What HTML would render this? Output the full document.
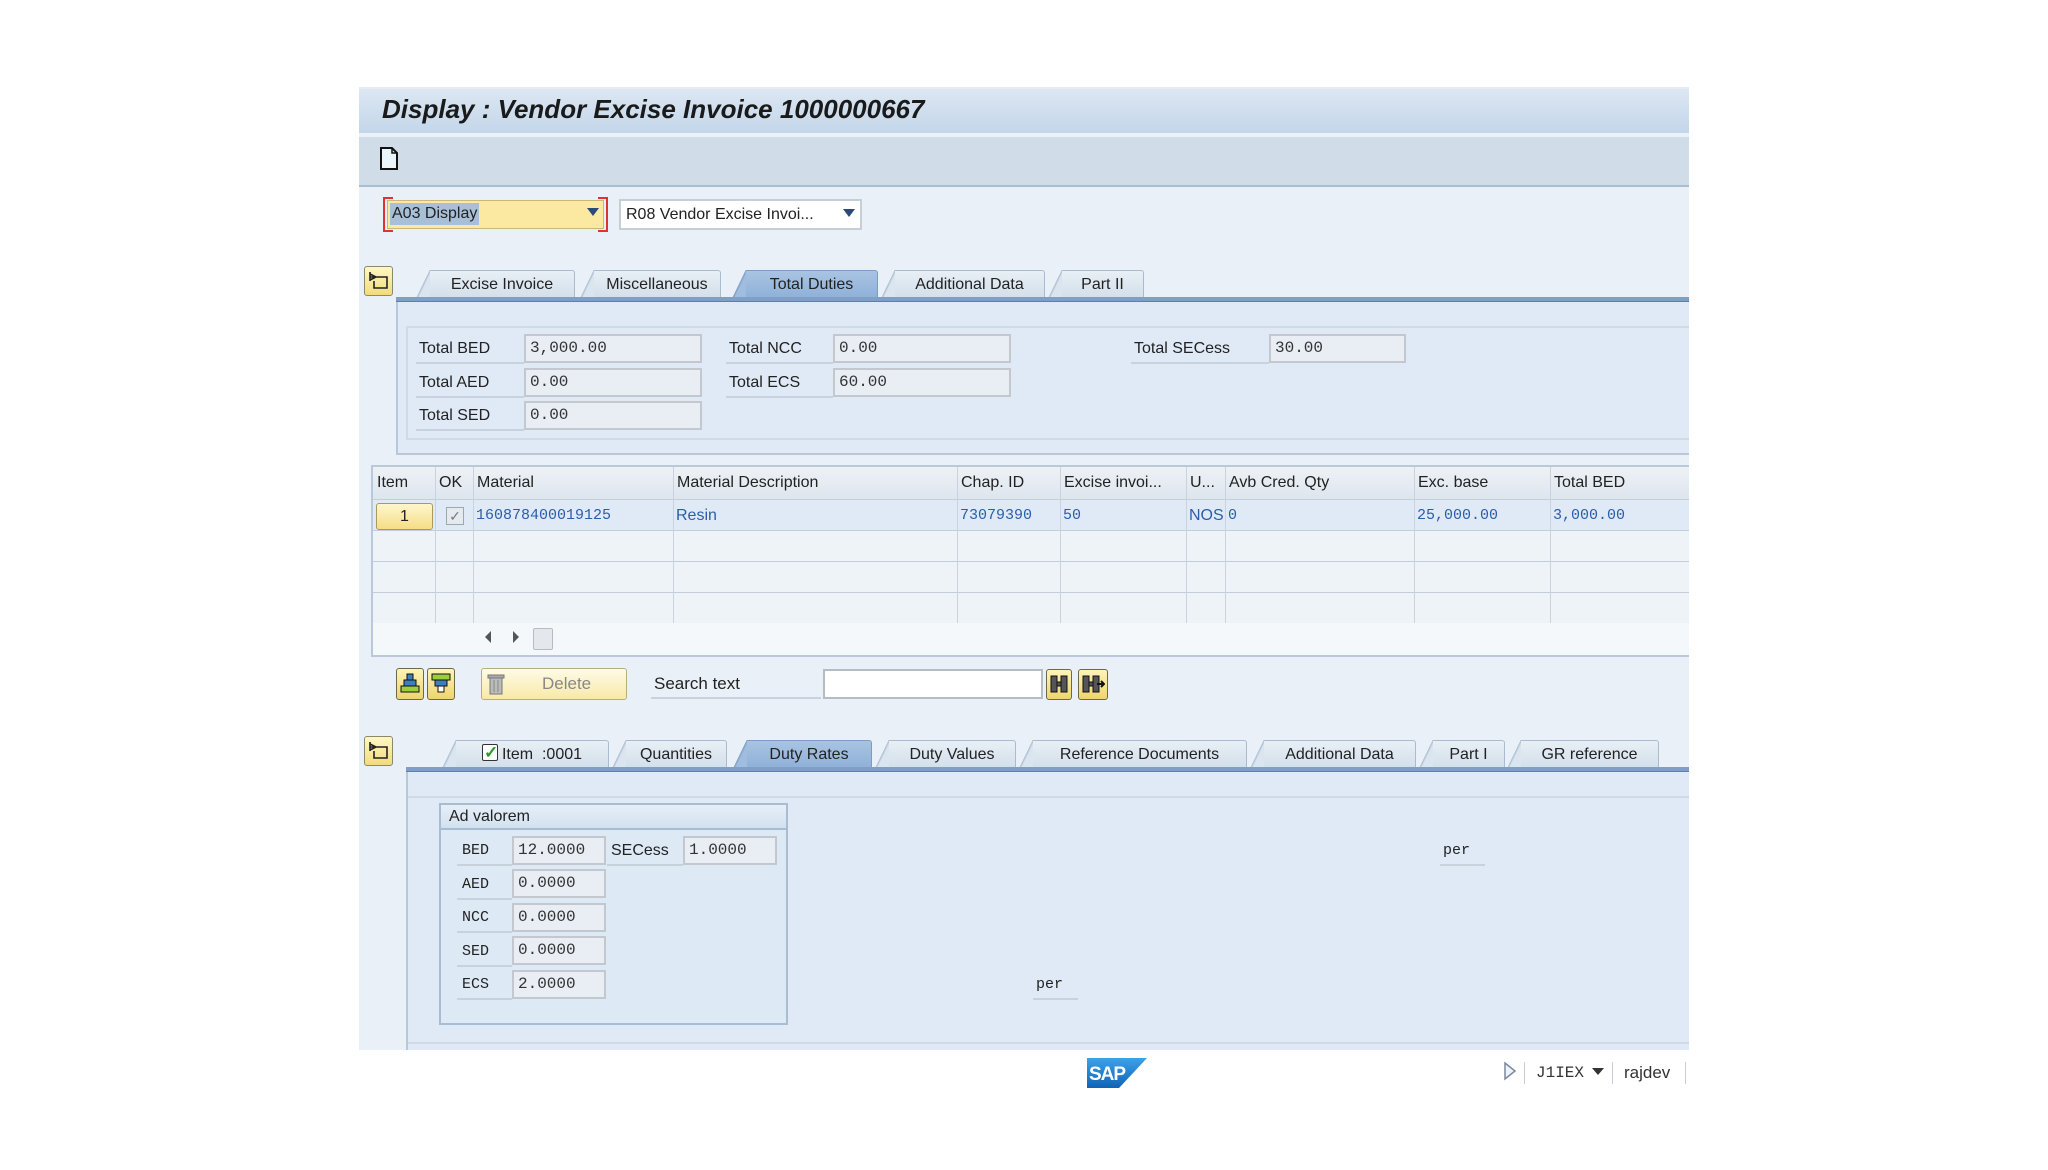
<!DOCTYPE html>
<html><head><meta charset="utf-8">
<style>
*{margin:0;padding:0;box-sizing:border-box}
body{width:2048px;height:1170px;background:#fff;position:relative;overflow:hidden;font-family:"Liberation Sans",sans-serif;font-size:16px;color:#222}
.a{position:absolute}
.lbl{position:absolute;border-bottom:2px solid #c8d2dc;height:29px;line-height:27px;padding-left:3px;color:#222;font-size:16px}
.fld{position:absolute;background:#e8eef4;border:2px solid #c2c8ce;height:29px;line-height:25px;padding-left:4px;font-family:"Liberation Mono",monospace;font-size:16px;color:#333}
.tab{position:absolute;height:28px;background:linear-gradient(#e8eff6,#d3dfea);border:1px solid #a9bccf;border-bottom:none;border-left:none;border-radius:0 3px 0 0;text-align:center;line-height:27px;font-size:16px;color:#222}
.tab.sel{background:linear-gradient(#a9c4e2,#8fb0d8);border-color:#7d9cc4}
.tab:before{content:"";position:absolute;left:-14px;top:-1px;width:14px;height:29px;background:linear-gradient(to bottom right,transparent 48%,#a9bccf 50%,#dbe5ef 58%)}
.tab.sel:before{background:linear-gradient(to bottom right,transparent 48%,#7d9cc4 50%,#a0bde0 58%)}
.tabicon{position:absolute;width:29px;height:30px;background:linear-gradient(#fff7c4,#f2dc7a);border:1px solid #8a8a6a;border-radius:3px}
.col{position:absolute;top:0;bottom:0;border-left:1px solid #c9d3dd}
.hdr{position:absolute;top:0;height:32px;line-height:32px;font-size:16px;color:#222;padding-left:4px}
.cell{position:absolute;height:31px;line-height:31px;font-family:"Liberation Mono",monospace;font-size:15px;color:#2a5ea8;padding-left:3px}
.mono{font-family:"Liberation Mono",monospace;font-size:15px}
</style></head><body>
<div class="a" style="left:359px;top:87px;width:1330px;height:964px;background:#e1ebf6"></div>
<div class="a" style="left:359px;top:87px;width:1330px;height:46px;background:linear-gradient(#dce7f2,#c3d6ea);border-top:2px solid #e6ecf2"></div>
<div class="a" style="left:382px;top:91px;font-size:26px;font-weight:bold;font-style:italic;color:#1a1a1a;line-height:36px">Display : Vendor Excise Invoice 1000000667</div>
<div class="a" style="left:359px;top:133px;width:1330px;height:54px;background:#d0dde8;border-top:4px solid #eaf1f7;border-bottom:2px solid #a9bdd0"></div>
<svg class="a" style="left:379px;top:147px" width="20" height="23"><path d="M2 1H13L18 6V22H2Z" fill="#eaf4fb" stroke="#111" stroke-width="2"/><path d="M13 1V6H18" fill="none" stroke="#111" stroke-width="1.5"/></svg>
<div class="a" style="left:359px;top:187px;width:1330px;height:864px;background:#e9f0f7"></div>
<div class="a" style="left:383px;top:197px;width:10px;height:35px;border:2px solid #d33;border-right:none"></div>
<div class="a" style="left:598px;top:197px;width:10px;height:35px;border:2px solid #d33;border-left:none"></div>
<div class="a" style="left:387px;top:200px;width:217px;height:29px;background:#fbe9a2;border:1px solid #c8b97a"></div>
<div class="a" style="left:390px;top:203px;height:22px;line-height:22px;padding:0 2px;background:#a8bfd8;font-size:16px">A03 Display</div>
<div class="a" style="left:587px;top:208px;width:0;height:0;border-left:6px solid transparent;border-right:6px solid transparent;border-top:8px solid #2a4a7a"></div>
<div class="a" style="left:619px;top:199px;width:243px;height:31px;background:#fff;border:2px solid #c6ced6;line-height:27px;padding-left:5px;font-size:16px">R08 Vendor Excise Invoi...</div>
<div class="a" style="left:843px;top:209px;width:0;height:0;border-left:6px solid transparent;border-right:6px solid transparent;border-top:8px solid #2a4a7a"></div>

<div class="tabicon" style="left:364px;top:266px"></div>
<svg class="a" style="left:368px;top:271px" width="22" height="20"><path d="M2 1V10M2 3L8 6L2 9M2 6H19V17H6V10" fill="none" stroke="#222" stroke-width="1.6"/></svg>
<div class="tab" style="left:430px;top:270px;width:145px">Excise Invoice</div>
<div class="tab" style="left:594px;top:270px;width:127px">Miscellaneous</div>
<div class="tab sel" style="left:746px;top:270px;width:132px">Total Duties</div>
<div class="tab" style="left:895px;top:270px;width:150px">Additional Data</div>
<div class="tab" style="left:1062px;top:270px;width:82px">Part II</div>
<div class="a" style="left:396px;top:297px;width:1293px;height:5px;background:#7f9fc6;border-bottom:1px solid #5f7fa8"></div>
<div class="a" style="left:396px;top:302px;width:1293px;height:153px;background:#dfeaf6;border-left:2px solid #b8c8d8;border-bottom:2px solid #b8c8d8"></div>
<div class="a" style="left:406px;top:326px;width:1283px;height:114px;border-top:2px solid #cfdae5;border-bottom:2px solid #cfdae5;border-left:2px solid #cfdae5"></div>

<div class="lbl" style="left:416px;top:335px;width:108px">Total BED</div>
<div class="fld" style="left:524px;top:334px;width:178px">3,000.00</div>
<div class="lbl" style="left:416px;top:369px;width:108px">Total AED</div>
<div class="fld" style="left:524px;top:368px;width:178px">0.00</div>
<div class="lbl" style="left:416px;top:402px;width:108px">Total SED</div>
<div class="fld" style="left:524px;top:401px;width:178px">0.00</div>
<div class="lbl" style="left:726px;top:335px;width:107px">Total NCC</div>
<div class="fld" style="left:833px;top:334px;width:178px">0.00</div>
<div class="lbl" style="left:726px;top:369px;width:107px">Total ECS</div>
<div class="fld" style="left:833px;top:368px;width:178px">60.00</div>
<div class="lbl" style="left:1131px;top:335px;width:138px">Total SECess</div>
<div class="fld" style="left:1269px;top:334px;width:137px">30.00</div>

<div class="a" style="left:371px;top:465px;width:1318px;height:192px;background:#fff;border:2px solid #b9c9d9;border-right:none;overflow:hidden">
  <div class="a" style="left:0;top:0;width:1318px;height:33px;background:linear-gradient(#eef2f6,#dde5ee);border-bottom:1px solid #c4ced8"></div>
  <div class="a" style="left:0;top:33px;width:1318px;height:31px;background:#dfeaf6;border-bottom:1px solid #c4ced8"></div>
  <div class="a" style="left:0;top:64px;width:1318px;height:31px;background:#eef3f8;border-bottom:1px solid #c4ced8"></div>
  <div class="a" style="left:0;top:95px;width:1318px;height:31px;background:#eef3f8;border-bottom:1px solid #c4ced8"></div>
  <div class="a" style="left:0;top:126px;width:1318px;height:30px;background:#eef3f8"></div>
  <div class="a" style="left:0;top:156px;width:1318px;height:34px;background:#f5f8fb"></div>
  <div class="a" style="left:0;top:0;width:1318px;height:156px">
    <div class="col" style="left:62px"></div><div class="col" style="left:100px"></div><div class="col" style="left:300px"></div><div class="col" style="left:584px"></div><div class="col" style="left:687px"></div><div class="col" style="left:813px"></div><div class="col" style="left:852px"></div><div class="col" style="left:1041px"></div><div class="col" style="left:1177px"></div>
  </div>
  <div class="hdr" style="left:0">Item</div><div class="hdr" style="left:62px">OK</div><div class="hdr" style="left:100px">Material</div><div class="hdr" style="left:300px">Material Description</div><div class="hdr" style="left:584px">Chap. ID</div><div class="hdr" style="left:687px">Excise invoi...</div><div class="hdr" style="left:813px">U...</div><div class="hdr" style="left:852px">Avb Cred. Qty</div><div class="hdr" style="left:1041px">Exc. base</div><div class="hdr" style="left:1177px">Total BED</div>
  <div class="a" style="left:3px;top:36px;width:57px;height:27px;background:linear-gradient(#fff6cc,#f5de86);border:1px solid #a99a5a;border-radius:3px;text-align:center;line-height:25px;font-size:16px">1</div>
  <div class="a" style="left:73px;top:40px;width:18px;height:18px;border:1px solid #9aa;background:#e6eaee;color:#778;font-size:14px;line-height:16px;text-align:center">✓</div>
  <div class="cell" style="left:100px;top:33px">160878400019125</div>
  <div class="cell" style="left:300px;top:33px;font-family:'Liberation Sans',sans-serif;font-size:16px">Resin</div>
  <div class="cell" style="left:584px;top:33px">73079390</div>
  <div class="cell" style="left:687px;top:33px">50</div>
  <div class="cell" style="left:813px;top:33px;font-family:'Liberation Sans',sans-serif;font-size:16px">NOS</div>
  <div class="cell" style="left:852px;top:33px">0</div>
  <div class="cell" style="left:1041px;top:33px">25,000.00</div>
  <div class="cell" style="left:1177px;top:33px">3,000.00</div>
  <div class="a" style="left:112px;top:164px;width:0;height:0;border-top:6px solid transparent;border-bottom:6px solid transparent;border-right:6px solid #555"></div>
  <div class="a" style="left:140px;top:164px;width:0;height:0;border-top:6px solid transparent;border-bottom:6px solid transparent;border-left:6px solid #555"></div>
  <div class="a" style="left:160px;top:161px;width:20px;height:22px;background:#e4e8ec;border:1px solid #b4bcc4;border-radius:2px"></div>
</div>

<div class="a" style="left:396px;top:668px;width:28px;height:32px;background:linear-gradient(#fff3b8,#eed56f);border:1px solid #6a6a4a;border-radius:3px"></div>
<svg class="a" style="left:399px;top:672px" width="22" height="24"><rect x="8" y="2" width="6" height="6" fill="#3c7fc0" stroke="#111"/><rect x="5" y="8" width="12" height="6" fill="#3c7fc0" stroke="#111"/><rect x="2" y="14" width="18" height="6" fill="#9bcf3a" stroke="#111"/></svg>
<div class="a" style="left:427px;top:668px;width:28px;height:32px;background:linear-gradient(#fff3b8,#eed56f);border:1px solid #6a6a4a;border-radius:3px"></div>
<svg class="a" style="left:430px;top:672px" width="22" height="24"><rect x="2" y="2" width="18" height="6" fill="#9bcf3a" stroke="#111"/><rect x="5" y="8" width="12" height="6" fill="#3c7fc0" stroke="#111"/><rect x="8" y="14" width="6" height="6" fill="#fff" stroke="#111"/></svg>
<div class="a" style="left:481px;top:668px;width:146px;height:32px;background:linear-gradient(#fffbe6,#f8e9a8);border:1px solid #b9ad80;border-radius:3px;line-height:30px;padding-left:60px;color:#888;font-size:17px">Delete</div>
<svg class="a" style="left:487px;top:673px" width="18" height="22"><rect x="1" y="2" width="16" height="3" fill="#aaa" stroke="#777"/><rect x="3" y="5" width="12" height="16" fill="#bbb" stroke="#777"/><path d="M7 7V19M11 7V19" stroke="#888"/></svg>
<div class="lbl" style="left:651px;top:670px;width:170px;font-size:17px">Search text</div>
<div class="a" style="left:823px;top:669px;width:220px;height:30px;background:#fff;border:2px solid #b4bcc4"></div>
<div class="a" style="left:1046px;top:669px;width:26px;height:31px;background:linear-gradient(#fff3b8,#eed56f);border:1px solid #6a6a4a;border-radius:3px"></div>
<svg class="a" style="left:1049px;top:673px" width="20" height="22"><path d="M2 3H8V19H2ZM12 3H18V19H12ZM8 9H12V13H8Z" fill="#555" stroke="#111"/></svg>
<div class="a" style="left:1078px;top:669px;width:30px;height:31px;background:linear-gradient(#fff3b8,#eed56f);border:1px solid #6a6a4a;border-radius:3px"></div>
<svg class="a" style="left:1081px;top:673px" width="24" height="22"><path d="M2 3H8V19H2ZM12 3H18V19H12ZM8 9H12V13H8Z" fill="#555" stroke="#111"/><path d="M16 11H23M20 8L23 11L20 14" stroke="#111" stroke-width="2" fill="none"/></svg>

<div class="tabicon" style="left:364px;top:736px"></div>
<svg class="a" style="left:368px;top:741px" width="22" height="20"><path d="M2 1V10M2 3L8 6L2 9M2 6H19V17H6V10" fill="none" stroke="#222" stroke-width="1.6"/></svg>
<div class="tab" style="left:456px;top:740px;width:153px"><span style="display:inline-block;width:16px;height:17px;border:1.5px solid #333;border-radius:2px;background:#fff;vertical-align:-2px;position:relative;margin-right:4px"><span style="position:absolute;left:1px;top:-6px;color:#2a9a2a;font-weight:bold;font-size:17px">✓</span></span>Item &nbsp;:0001</div>
<div class="tab" style="left:626px;top:740px;width:101px">Quantities</div>
<div class="tab sel" style="left:747px;top:740px;width:125px">Duty Rates</div>
<div class="tab" style="left:889px;top:740px;width:127px">Duty Values</div>
<div class="tab" style="left:1033px;top:740px;width:214px">Reference Documents</div>
<div class="tab" style="left:1264px;top:740px;width:152px">Additional Data</div>
<div class="tab" style="left:1433px;top:740px;width:72px">Part I</div>
<div class="tab" style="left:1521px;top:740px;width:138px">GR reference</div>
<div class="a" style="left:406px;top:767px;width:1283px;height:5px;background:#7f9fc6;border-bottom:1px solid #5f7fa8"></div>
<div class="a" style="left:406px;top:772px;width:1283px;height:278px;background:#dfeaf6;border-left:2px solid #b8c8d8"></div>
<div class="a" style="left:408px;top:796px;width:1281px;height:248px;border-top:2px solid #cfdae5;border-bottom:2px solid #cfdae5"></div>

<div class="a" style="left:439px;top:803px;width:349px;height:222px;border:2px solid #a9bdd2;background:#dde9f5"></div>
<div class="a" style="left:441px;top:805px;width:345px;height:25px;background:linear-gradient(#e6eff8,#d3e1ef);border-bottom:2px solid #a9bdd2;line-height:24px;padding-left:8px;font-size:16px">Ad valorem</div>
<div class="lbl mono" style="left:457px;top:837px;width:55px;padding-left:5px">BED</div>
<div class="fld" style="left:512px;top:836px;width:94px">12.0000</div>
<div class="lbl" style="left:607px;top:837px;width:76px;padding-left:4px">SECess</div>
<div class="fld" style="left:683px;top:836px;width:94px">1.0000</div>
<div class="lbl mono" style="left:457px;top:871px;width:55px;padding-left:5px">AED</div>
<div class="fld" style="left:512px;top:869px;width:94px">0.0000</div>
<div class="lbl mono" style="left:457px;top:904px;width:55px;padding-left:5px">NCC</div>
<div class="fld" style="left:512px;top:903px;width:94px">0.0000</div>
<div class="lbl mono" style="left:457px;top:938px;width:55px;padding-left:5px">SED</div>
<div class="fld" style="left:512px;top:936px;width:94px">0.0000</div>
<div class="lbl mono" style="left:457px;top:971px;width:55px;padding-left:5px">ECS</div>
<div class="fld" style="left:512px;top:970px;width:94px">2.0000</div>
<div class="lbl mono" style="left:1440px;top:837px;width:45px">per</div>
<div class="lbl mono" style="left:1033px;top:971px;width:45px">per</div>

<div class="a" style="left:359px;top:1050px;width:1330px;height:50px;background:#fff"></div>
<svg class="a" style="left:1087px;top:1058px" width="60" height="30"><defs><linearGradient id="g" x1="0" y1="0" x2="0" y2="1"><stop offset="0" stop-color="#3ba3e8"/><stop offset="1" stop-color="#1263b5"/></linearGradient></defs><path d="M0 0H60L32 30H0Z" fill="url(#g)"/><text x="2" y="22" font-family="Liberation Sans" font-weight="bold" font-size="19" fill="#fff" letter-spacing="-1">SAP</text></svg>
<svg class="a" style="left:1503px;top:1061px" width="14" height="20"><path d="M2 2L12 10L2 18Z" fill="#eef3f8" stroke="#7a8aa0" stroke-width="1.5"/></svg>
<div class="a" style="left:1524px;top:1062px;width:1px;height:22px;background:#ccd"></div>
<div class="a" style="left:1536px;top:1060px;font-family:'Liberation Mono',monospace;font-size:16px;color:#333;line-height:26px">J1IEX</div>
<div class="a" style="left:1592px;top:1068px;border-left:6px solid transparent;border-right:6px solid transparent;border-top:7px solid #333"></div>
<div class="a" style="left:1612px;top:1062px;width:1px;height:22px;background:#ccd"></div>
<div class="a" style="left:1624px;top:1060px;font-size:17px;color:#333;line-height:26px">rajdev</div>
<div class="a" style="left:1685px;top:1062px;width:1px;height:22px;background:#ccd"></div>
</body></html>
